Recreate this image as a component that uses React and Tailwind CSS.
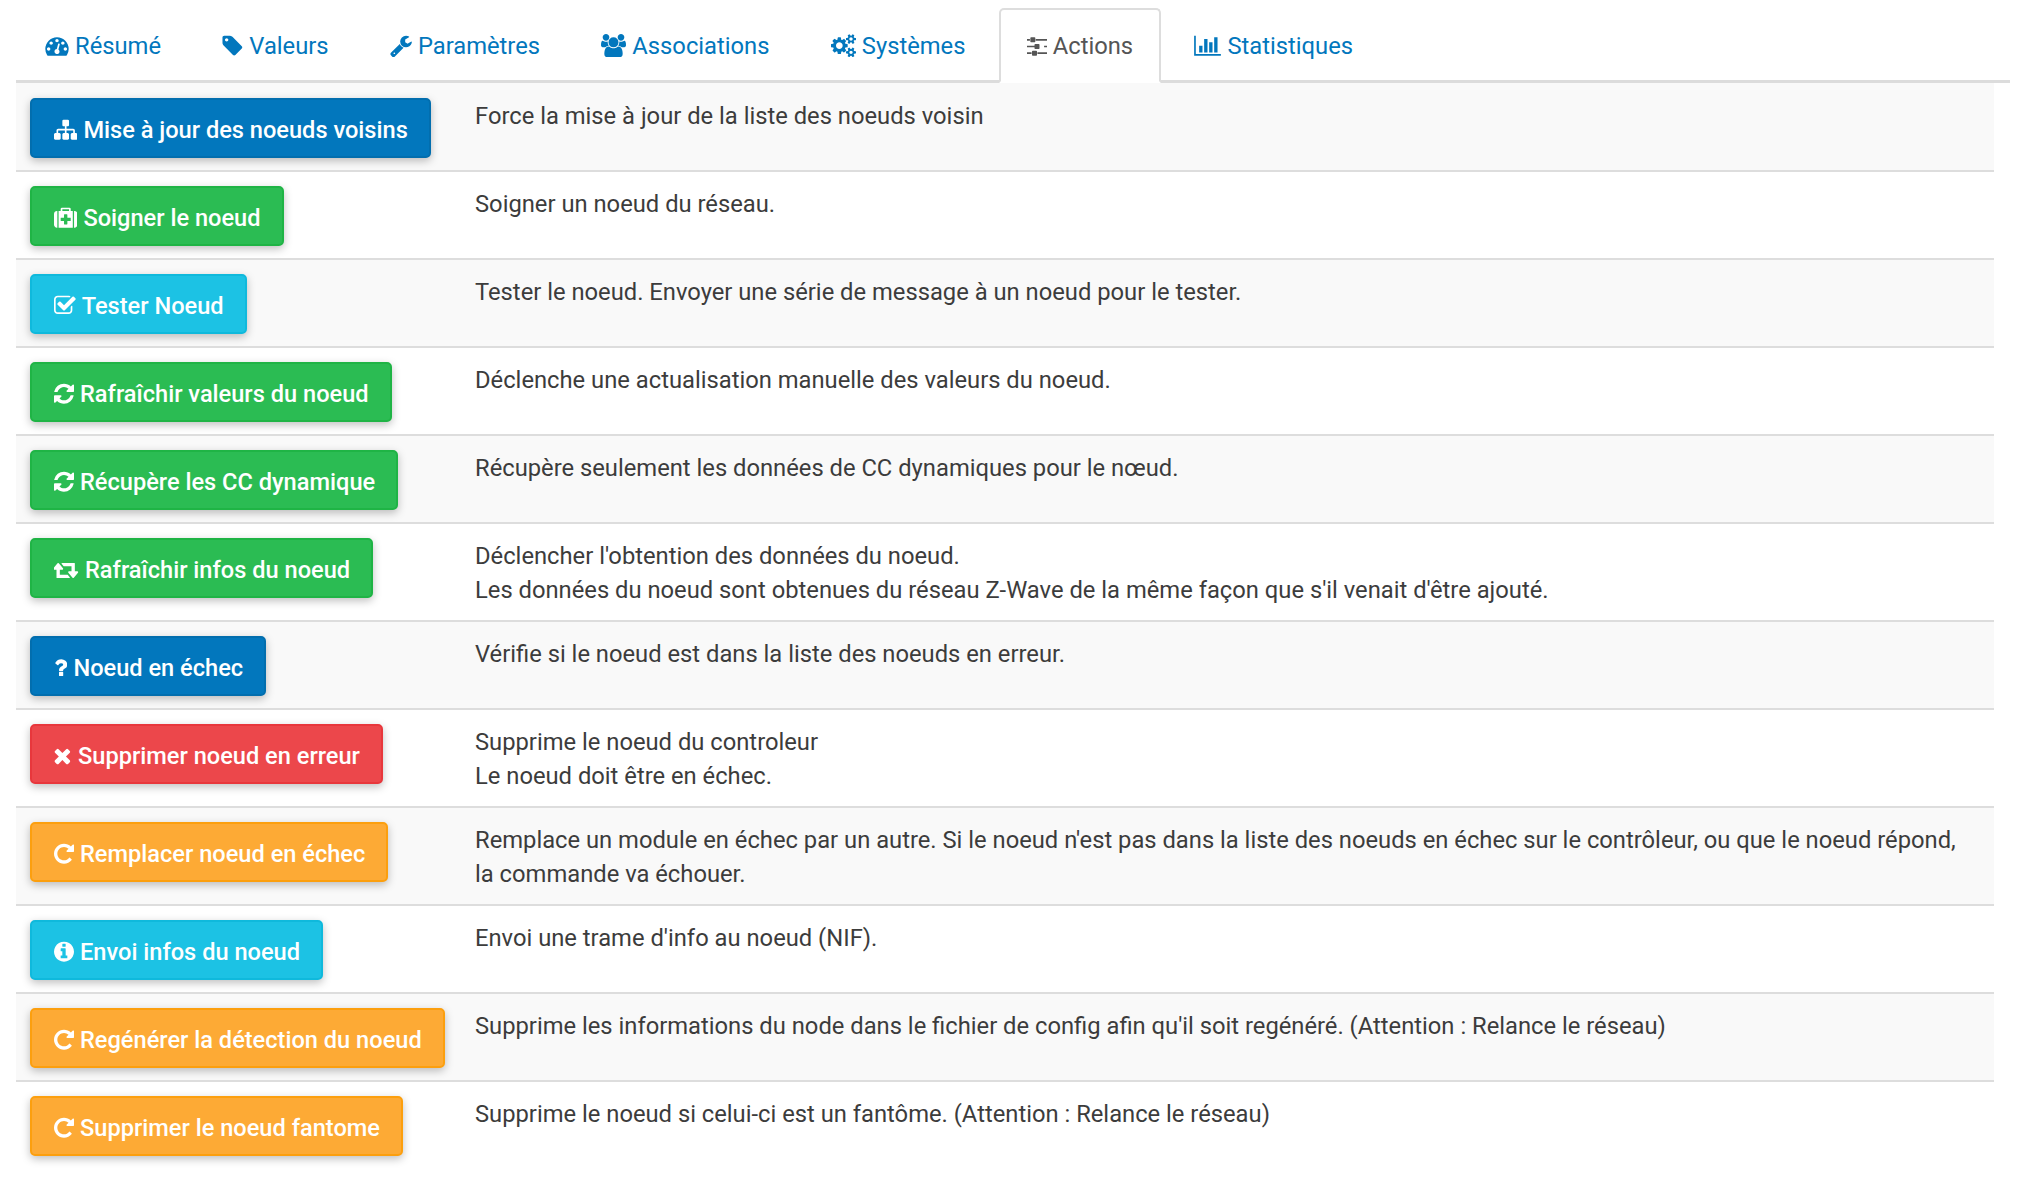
import React from "react";

const P = ({ d, vb, w }) => (
  <svg viewBox={vb} width={w} height="23.4" fill="currentColor" className="shrink-0"><path d={d} /></svg>
);
const Dash = () => <P w={24} vb="0 0 1792 1792" d="M384 1152q0-53-37.5-90.5t-90.5-37.5-90.5 37.5-37.5 90.5 37.5 90.5 90.5 37.5 90.5-37.5 37.5-90.5zm192-448q0-53-37.5-90.5t-90.5-37.5-90.5 37.5-37.5 90.5 37.5 90.5 90.5 37.5 90.5-37.5 37.5-90.5zm428 481l101-382q6-26-7.5-48.5t-38.5-29.5-48 6.5-30 39.5l-101 382q-60 5-107 43.5t-63 98.5q-20 77 20 146t117 89 146-20 89-117q16-60-6-117t-72-91zm660-33q0-53-37.5-90.5t-90.5-37.5-90.5 37.5-37.5 90.5 37.5 90.5 90.5 37.5 90.5-37.5 37.5-90.5zm-640-640q0-53-37.5-90.5t-90.5-37.5-90.5 37.5-37.5 90.5 37.5 90.5 90.5 37.5 90.5-37.5 37.5-90.5zm448 192q0-53-37.5-90.5t-90.5-37.5-90.5 37.5-37.5 90.5 37.5 90.5 90.5 37.5 90.5-37.5 37.5-90.5zm320 448q0 261-141 483-19 29-54 29h-1402q-35 0-54-29-141-221-141-483 0-182 71-348t191-286 286-191 348-71 348 71 286 191 191 286 71 348z" />;
const Tag = () => <P w={21} vb="128 0 1536 1792" d="M576 448q0-53-37.5-90.5t-90.5-37.5-90.5 37.5-37.5 90.5 37.5 90.5 90.5 37.5 90.5-37.5 37.5-90.5zm1067 576q0 53-37 90l-491 492q-39 37-91 37-53 0-90-37l-715-716q-38-37-64.5-101t-26.5-117v-416q0-52 38-90t90-38h416q53 0 117 26.5t102 64.5l715 714q37 39 37 91z" />;
const Wrench = () => <P w={22} vb="64 0 1664 1792" d="M448 1472q0-26-19-45t-45-19-45 19-19 45 19 45 45 19 45-19 19-45zm644-420l-682 682q-37 37-90 37-52 0-91-37l-106-108q-38-36-38-90 0-53 38-91l681-681q39 98 114.5 173.5t173.5 114.5zm634-435q0 39-23 106-47 134-164.5 217.5t-258.5 83.5q-185 0-316.5-131.5t-131.5-316.5 131.5-316.5 316.5-131.5q58 0 121.5 16.5t107.5 46.5q16 11 16 28t-16 28l-293 169v224l193 107q5-3 79-48.5t135.5-81 70.5-35.5q15 0 23.5 10t8.5 25z" />;
const Users = () => <P w={25} vb="0 0 1920 1792" d="M593 896q-162 5-265 128h-134q-82 0-138-40.5t-56-118.5q0-353 124-353 6 0 43.5 21t97.5 42.5 119 21.5q67 0 133-23-5 37-5 66 0 139 81 256zm1071 637q0 120-73 189.5t-194 69.5h-874q-121 0-194-69.5t-73-189.5q0-53 3.5-103.5t14-109 26.5-108.5 43-97.5 62-81 85.5-53.5 111.5-20q10 0 43 21.5t73 48 107 48 135 21.5 135-21.5 107-48 73-48 43-21.5q61 0 111.5 20t85.5 53.5 62 81 43 97.5 26.5 108.5 14 109 3.5 103.5zm-1024-1277q0 106-75 181t-181 75-181-75-75-181 75-181 181-75 181 75 75 181zm704 384q0 159-112.5 271.5t-271.5 112.5-271.5-112.5-112.5-271.5 112.5-271.5 271.5-112.5 271.5 112.5 112.5 271.5zm576 225q0 78-56 118.5t-138 40.5h-134q-103-123-265-128 81-117 81-256 0-29-5-66 66 23 133 23 59 0 119-21.5t97.5-42.5 43.5-21q124 0 124 353zm-128-609q0 106-75 181t-181 75-181-75-75-181 75-181 181-75 181 75 75 181z" />;
const Cogs = () => <P w={25} vb="0 0 1920 1792" d="M896 896q0-106-75-181t-181-75-181 75-75 181 75 181 181 75 181-75 75-181zm768 512q0-52-38-90t-90-38-90 38-38 90q0 53 37.5 90.5t90.5 37.5 90.5-37.5 37.5-90.5zm0-1024q0-52-38-90t-90-38-90 38-38 90q0 53 37.5 90.5t90.5 37.5 90.5-37.5 37.5-90.5zm-384 421v185q0 10-7 19.5t-16 10.5l-155 24q-11 35-32 76 34 48 90 115 7 11 7 20 0 12-7 19-23 30-82.5 89.5t-78.5 59.5q-11 0-21-7l-115-90q-37 19-77 31-11 108-23 155-7 24-30 24h-186q-11 0-20-7.5t-10-17.5l-23-153q-34-10-75-31l-118 89q-7 7-20 7-11 0-21-8-144-133-144-160 0-9 7-19 10-14 41-53t47-61q-23-44-35-82l-152-24q-10-1-17-9.5t-7-19.5v-185q0-10 7-19.5t16-10.5l155-24q11-35 32-76-34-48-90-115-7-11-7-20 0-12 7-20 22-30 82-89t79-59q11 0 21 7l115 90q34-18 77-32 11-108 23-154 7-24 30-24h186q11 0 20 7.5t10 17.5l23 153q34 10 75 31l118-89q8-7 20-7 11 0 21 8 144 133 144 160 0 8-7 19-12 16-42 54t-45 60q23 48 34 82l152 23q10 2 17 10.5t7 19.5zm640 533v140q0 16-149 31-12 27-30 52 51 113 51 138 0 4-4 7-122 71-124 71-8 0-46-47t-52-68q-20 2-30 2t-30-2q-14 21-52 68t-46 47q-2 0-124-71-4-3-4-7 0-25 51-138-18-25-30-52-149-15-149-31v-140q0-16 149-31 13-29 30-52-51-113-51-138 0-4 4-7 4-2 35-20t59-34 30-16q8 0 46 46.5t52 67.5q20-2 30-2t30 2q51-71 92-112l6-2q4 0 124 70 4 3 4 7 0 25-51 138 17 23 30 52 149 15 149 31zm0-1024v140q0 16-149 31-12 27-30 52 51 113 51 138 0 4-4 7-122 71-124 71-8 0-46-47t-52-68q-20 2-30 2t-30-2q-14 21-52 68t-46 47q-2 0-124-71-4-3-4-7 0-25 51-138-18-25-30-52-149-15-149-31v-140q0-16 149-31 13-29 30-52-51-113-51-138 0-4 4-7 4-2 35-20t59-34 30-16q8 0 46 46.5t52 67.5q20-2 30-2t30 2q51-71 92-112l6-2q4 0 124 70 4 3 4 7 0 25-51 138 17 23 30 52 149 15 149 31z" />;
const Sliders = () => <P w={20} vb="0 0 1536 1792" d="M352 1408v128h-352v-128h352zm352-128q26 0 45 19t19 45v256q0 26-19 45t-45 19h-256q-26 0-45-19t-19-45v-256q0-26 19-45t45-19h256zm160-384v128h-864v-128h864zm-640-512v128h-224v-128h224zm1312 1024v128h-736v-128h736zm-960-1152q26 0 45 19t19 45v256q0 26-19 45t-45 19h-256q-26 0-45-19t-19-45v-256q0-26 19-45t45-19h256zm320 512q26 0 45 19t19 45v256q0 26-19 45t-45 19h-256q-26 0-45-19t-19-45v-256q0-26 19-45t45-19h256zm640 128v128h-224v-128h224zm0-512v128h-864v-128h864z" />;
const Bars = () => <P w={27} vb="0 0 2048 1792" d="M640 896v512h-256v-512h256zm384-512v1024h-256v-1024h256zm1024 1152v128h-2048v-1536h128v1408h1920zm-640-896v768h-256v-768h256zm384-384v1152h-256v-1152h256z" />;
const Sitemap = () => <P w={23.4} vb="0 0 1792 1792" d="M1792 1248v320q0 40-28 68t-68 28h-320q-40 0-68-28t-28-68v-320q0-40 28-68t68-28h96v-192h-512v192h96q40 0 68 28t28 68v320q0 40-28 68t-68 28h-320q-40 0-68-28t-28-68v-320q0-40 28-68t68-28h96v-192h-512v192h96q40 0 68 28t28 68v320q0 40-28 68t-68 28h-320q-40 0-68-28t-28-68v-320q0-40 28-68t68-28h96v-192q0-52 38-90t90-38h512v-192h-96q-40 0-68-28t-28-68v-320q0-40 28-68t68-28h320q40 0 68 28t28 68v320q0 40-28 68t-68 28h-96v192h512q52 0 90 38t38 90v192h96q40 0 68 28t28 68z" />;
const Medkit = () => <P w={23.4} vb="0 0 1792 1792" d="M1280 1120v-192q0-14-9-23t-23-9h-224v-224q0-14-9-23t-23-9h-192q-14 0-23 9t-9 23v224h-224q-14 0-23 9t-9 23v192q0 14 9 23t23 9h224v224q0 14 9 23t23 9h192q14 0 23-9t9-23v-224h224q14 0 23-9t9-23zm-640-736h512v-128h-512v128zm-384 0v1280h-32q-92 0-158-66t-66-158v-832q0-92 66-158t158-66h32zm1184 0v1280h-1088v-1280h160v-160q0-40 28-68t68-28h576q40 0 68 28t28 68v160h160zm352 224v832q0 92-66 158t-158 66h-32v-1280h32q92 0 158 66t66 158z" />;
const Check = () => <P w={21.7} vb="64 0 1664 1792" d="M1472 930v318q0 119-84.5 203.5t-203.5 84.5h-832q-119 0-203.5-84.5t-84.5-203.5v-832q0-119 84.5-203.5t203.5-84.5h832q63 0 117 25 15 7 18 23 3 17-9 29l-49 49q-10 10-23 10-3 0-9-2-23-6-45-6h-832q-66 0-113 47t-47 113v832q0 66 47 113t113 47h832q66 0 113-47t47-113v-254q0-13 9-22l64-64q10-10 23-10 6 0 12 3 20 8 20 29zm231-489l-814 814q-24 24-57 24t-57-24l-430-430q-24-24-24-57t24-57l110-110q24-24 57-24t57 24l263 263 647-647q24-24 57-24t57 24l110 110q24 24 24 57t-24 57z" />;
const Refresh = () => <P w={20} vb="128 0 1536 1792" d="M1639 1056q0 5-1 7-64 268-268 434.5t-478 166.5q-146 0-282.5-55t-243.5-157l-129 129q-19 19-45 19t-45-19-19-45v-448q0-26 19-45t45-19h448q26 0 45 19t19 45-19 45l-137 137q71 66 161 102t187 36q134 0 250-65t186-179q11-17 53-117 8-23 30-23h192q13 0 22.5 9.5t9.5 22.5zm25-800v448q0 26-19 45t-45 19h-448q-26 0-45-19t-19-45 19-45l138-138q-148-137-349-137-134 0-250 65t-186 179q-11 17-53 117-8 23-30 23h-199q-13 0-22.5-9.5t-9.5-22.5v-7q65-268 270-434.5t480-166.5q146 0 284 55.5t245 156.5l130-129q19-19 45-19t45 19 19 45z" />;
const Repeat = () => <P w={20} vb="128 0 1536 1792" d="M1664 256v448q0 26-19 45t-45 19h-448q-42 0-59-40-17-39 14-69l138-138q-148-137-349-137-104 0-198.5 40.5t-163.5 109.5-109.5 163.5-40.5 198.5 40.5 198.5 109.5 163.5 163.5 109.5 198.5 40.5q119 0 225-52t179-147q7-10 23-12 15 0 25 9l137 138q9 8 9.5 20.5t-7.5 22.5q-109 132-264 204.5t-327 72.5q-156 0-298-61t-245-164-164-245-61-298 61-298 164-245 245-164 298-61q147 0 284.5 55.5t244.5 156.5l130-129q29-31 70-14 39 17 39 59z" />;
const Retweet = () => <P w={25} vb="0 0 1920 1792" d="M1216 1504q0 13-9.5 22.5t-22.5 9.5h-960q-8 0-13.5-2t-9-7-5.5-8-3-11.5-1-11.5v-600h-192q-26 0-45-19t-19-45q0-24 15-41l320-384q19-22 49-22t49 22l320 384q15 17 15 41 0 26-19 45t-45 19h-192v384h576q16 0 25 11l160 192q7 10 7 21zm640-416q0 24-15 41l-320 384q-20 23-49 23t-49-23l-320-384q-15-17-15-41 0-26 19-45t45-19h192v-384h-576q-16 0-25-12l-160-192q-7-9-7-20 0-13 9.5-22.5t22.5-9.5h960q8 0 13.5 2t9 7 5.5 8 3 11.5 1 11.5v600h192q26 0 45 19t19 45z" />;
const Question = () => <P w={13.4} vb="384 0 1024 1792" d="M1088 1256v240q0 16-12 28t-28 12h-240q-16 0-28-12t-12-28v-240q0-16 12-28t28-12h240q16 0 28 12t12 28zm316-600q0 54-15.5 101t-35 76.5-55 59.5-57.5 43.5-61 35.5q-41 23-68.5 65t-27.5 67q0 17-12 32.5t-28 15.5h-240q-15 0-25.5-18.5t-10.5-37.5v-45q0-83 65-156.5t143-108.5q59-27 84-56t25-76q0-42-46.5-74t-107.5-32q-65 0-108 29-35 25-107 115-13 16-31 16-12 0-25-8l-164-125q-13-10-15.5-25t5.5-28q160-266 464-266 80 0 161 31t146 83 106 127.5 41 158.5z" />;
const Times = () => <P w={18} vb="100 0 1300 1792" d="M1298 1322q0 40-28 68l-136 136q-28 28-68 28t-68-28l-294-294-294 294q-28 28-68 28t-68-28l-136-136q-28-28-28-68t28-68l294-294-294-294q-28-28-28-68t28-68l136-136q28-28 68-28t68 28l294 294 294-294q28-28 68-28t68 28l136 136q28 28 28 68t-28 68l-294 294 294 294q28 28 28 68z" />;
const Info = () => <P w={20} vb="128 0 1536 1792" d="M1152 1376v-160q0-14-9-23t-23-9h-96v-512q0-14-9-23t-23-9h-320q-14 0-23 9t-9 23v160q0 14 9 23t23 9h96v320h-96q-14 0-23 9t-9 23v160q0 14 9 23t23 9h448q14 0 23-9t9-23zm-128-896v-160q0-14-9-23t-23-9h-192q-14 0-23 9t-9 23v160q0 14 9 23t23 9h192q14 0 23-9t9-23zm640 416q0 209-103 385.5t-279.5 279.5-385.5 103-385.5-103-279.5-279.5-103-385.5 103-385.5 279.5-279.5 385.5-103 385.5 103 279.5 279.5 103 385.5z" />;

const tabs = [
  [<Dash />, "Résumé"],
  [<Tag />, "Valeurs"],
  [<Wrench />, "Paramètres"],
  [<Users />, "Associations"],
  [<Cogs />, "Systèmes"],
  [<Sliders />, "Actions", true],
  [<Bars />, "Statistiques"],
];

const blue = "bg-[#0277bd] border-[#026eae]";
const green = "bg-[#2bbc53] border-[#1fb445]";
const cyan = "bg-[#1cc2e4] border-[#0fb9dc]";
const red = "bg-[#ec474b] border-[#e8373c]";
const orange = "bg-[#fdaa35] border-[#fc9f0e]";

const rows = [
  [blue, <Sitemap />, "Mise à jour des noeuds voisins", ["Force la mise à jour de la liste des noeuds voisin"]],
  [green, <Medkit />, "Soigner le noeud", ["Soigner un noeud du réseau."]],
  [cyan, <Check />, "Tester Noeud", ["Tester le noeud. Envoyer une série de message à un noeud pour le tester."]],
  [green, <Refresh />, "Rafraîchir valeurs du noeud", ["Déclenche une actualisation manuelle des valeurs du noeud."]],
  [green, <Refresh />, "Récupère les CC dynamique", ["Récupère seulement les données de CC dynamiques pour le nœud."]],
  [green, <Retweet />, "Rafraîchir infos du noeud", ["Déclencher l'obtention des données du noeud.", "Les données du noeud sont obtenues du réseau Z-Wave de la même façon que s'il venait d'être ajouté."]],
  [blue, <Question />, "Noeud en échec", ["Vérifie si le noeud est dans la liste des noeuds en erreur."]],
  [red, <Times />, "Supprimer noeud en erreur", ["Supprime le noeud du controleur", "Le noeud doit être en échec."]],
  [orange, <Repeat />, "Remplacer noeud en échec", ["Remplace un module en échec par un autre. Si le noeud n'est pas dans la liste des noeuds en échec sur le contrôleur, ou que le noeud répond, la commande va échouer."]],
  [cyan, <Info />, "Envoi infos du noeud", ["Envoi une trame d'info au noeud (NIF)."]],
  [orange, <Repeat />, "Regénérer la détection du noeud", ["Supprime les informations du node dans le fichier de config afin qu'il soit regénéré. (Attention : Relance le réseau)"]],
  [orange, <Repeat />, "Supprimer le noeud fantome", ["Supprime le noeud si celui-ci est un fantôme. (Attention : Relance le réseau)"]],
];

export default function App() {
  return (
    <div className="min-h-[1200px] bg-white font-['Roboto',sans-serif] text-[23.75px] leading-[34px] text-[#3c3c3c]">
      <div className="pt-2 pl-4 w-[2010px]">
        <div className="flex h-[75px] pl-[1px] border-b-[3px] border-[#dcdcdc]">
          {tabs.map(([icon, label, active], i) => (
            <div
              key={i}
              className={
                "flex items-center gap-[6px] px-[26px] h-[75px] mr-[5.3px] border-2 text-[23.75px] rounded-t-[5px] " +
                (active ? "bg-white border-[#dddddd] border-b-white text-[#555555]" : "border-transparent text-[#0277bd]")
              }
            >
              {icon}
              <span>{label}</span>
            </div>
          ))}
        </div>
      </div>
      <div className="ml-4 w-[1978px]">
        {rows.map(([color, icon, label, lines], i) => (
          <div
            key={i}
            className={
              "flex " +
              (i === 0 ? "pt-[14px] " : "pt-[13px] ") +
              (i < rows.length - 1 ? "border-b-2 border-[#dddddd] " : "") +
              (i % 2 === 0 ? "bg-[#f9f9f9]" : "bg-white")
            }
          >
            <div className="w-[459px] shrink-0 pl-[14px] pt-[1px] pb-[12px]">
              <div className={"inline-flex items-center gap-[6px] h-[60px] pl-[22px] pr-[21px] pt-[3px] border-2 rounded-[5px] font-medium text-[23.6px] text-white shadow-[0_3px_8px_rgba(0,0,0,0.25)] " + color}>
                {icon}
                <span>{label}</span>
              </div>
            </div>
            <div className="flex-1 pt-[2px] pb-[13px] pr-[16px]">
              {lines.map((l, j) => (
                <div key={j}>{l}</div>
              ))}
            </div>
          </div>
        ))}
      </div>
    </div>
  );
}
